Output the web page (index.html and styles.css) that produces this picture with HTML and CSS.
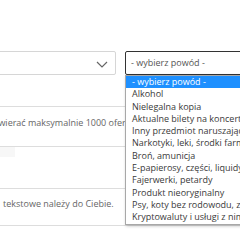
FILE: index.html
```html
<!DOCTYPE html>
<html lang="pl">
<head>
<meta charset="utf-8">
<link rel="stylesheet" href="styles.css">
</head>
<body>
<div class="page">
  <div class="selects">
    <div class="select left">
      <svg class="chev" width="12" height="7" viewBox="0 0 12 7"><path d="M1 1l5 5 5-5" fill="none" stroke="#666" stroke-width="1.2"/></svg>
    </div>
    <div class="select right">
      <span class="val">- wybierz powód -</span>
      <ul class="list">
        <li class="sel">- wybierz powód -</li>
        <li>Alkohol</li>
        <li>Nielegalna kopia</li>
        <li>Aktualne bilety na koncerty i wydarzenia</li>
        <li>Inny przedmiot naruszający regulamin</li>
        <li>Narkotyki, leki, środki farmaceutyczne</li>
        <li>Broń, amunicja</li>
        <li>E-papierosy, części, liquidy</li>
        <li>Fajerwerki, petardy</li>
        <li>Produkt nieoryginalny</li>
        <li>Psy, koty bez rodowodu, zwierzęta</li>
        <li>Kryptowaluty i usługi z nimi związane</li>
      </ul>
    </div>
  </div>
  <div class="block b1"><p class="note n1">Lista może zawierać maksymalnie 1000 ofert</p></div>
  <div class="block b2"><span class="corner"></span></div>
  <div class="block b3"><p class="note n3">tekstowe należy do Ciebie.</p></div>
  <div class="block b4"></div>
</div>
</body>
</html>
```
FILE: styles.css
```css
html, body { margin: 0; padding: 0; background: #fff; }
body { width: 240px; height: 240px; overflow: hidden; font-family: "Open Sans", sans-serif; }
.page { padding-top: 51px; position: relative; width: 240px; height: 189px; overflow: hidden; }
.selects { display: flex; gap: 9px; height: 24px; }
.select { box-sizing: border-box; height: 24px; position: relative; flex-shrink: 0; }
.left { width: 118px; margin-left: -2px; border: 1px solid #d6d6d6; border-radius: 2px; }
.chev { position: absolute; right: 7px; top: 9px; }
.right { width: 130px; border: 1px solid #333; border-radius: 2px; padding-left: 5px; font-size: 9px; color: #555; line-height: 22px; }
.val { white-space: nowrap; }
.list { position: absolute; left: -1px; top: 23px; width: 130px; margin: 0; padding: 0; list-style: none; background: #fff; border: 1px solid #a8a8a8; box-shadow: 1px 1px 3px rgba(0,0,0,.25); z-index: 2; }
.list li { font-size: 9px; line-height: 12.3px; color: #3a3a3a; padding-left: 6px; white-space: nowrap; overflow: hidden; }
.list li.sel { background: #1e90ff; color: #fff; }
.block { border-top: 1px solid #ddd; }
.b1 { margin-top: 31px; height: 39px; overflow: hidden; }
.note { margin: 0; font-size: 9px; color: #666; white-space: nowrap; }
.n1 { margin-left: -58px; padding-top: 9px; }
.b2 { height: 41px; }
.corner { display: block; width: 15px; height: 10px; background: #f7f7f7; }
.b3 { height: 36px; }
.n3 { padding-top: 8px; padding-left: 3px; }
.b4 { height: 10px; }
```
